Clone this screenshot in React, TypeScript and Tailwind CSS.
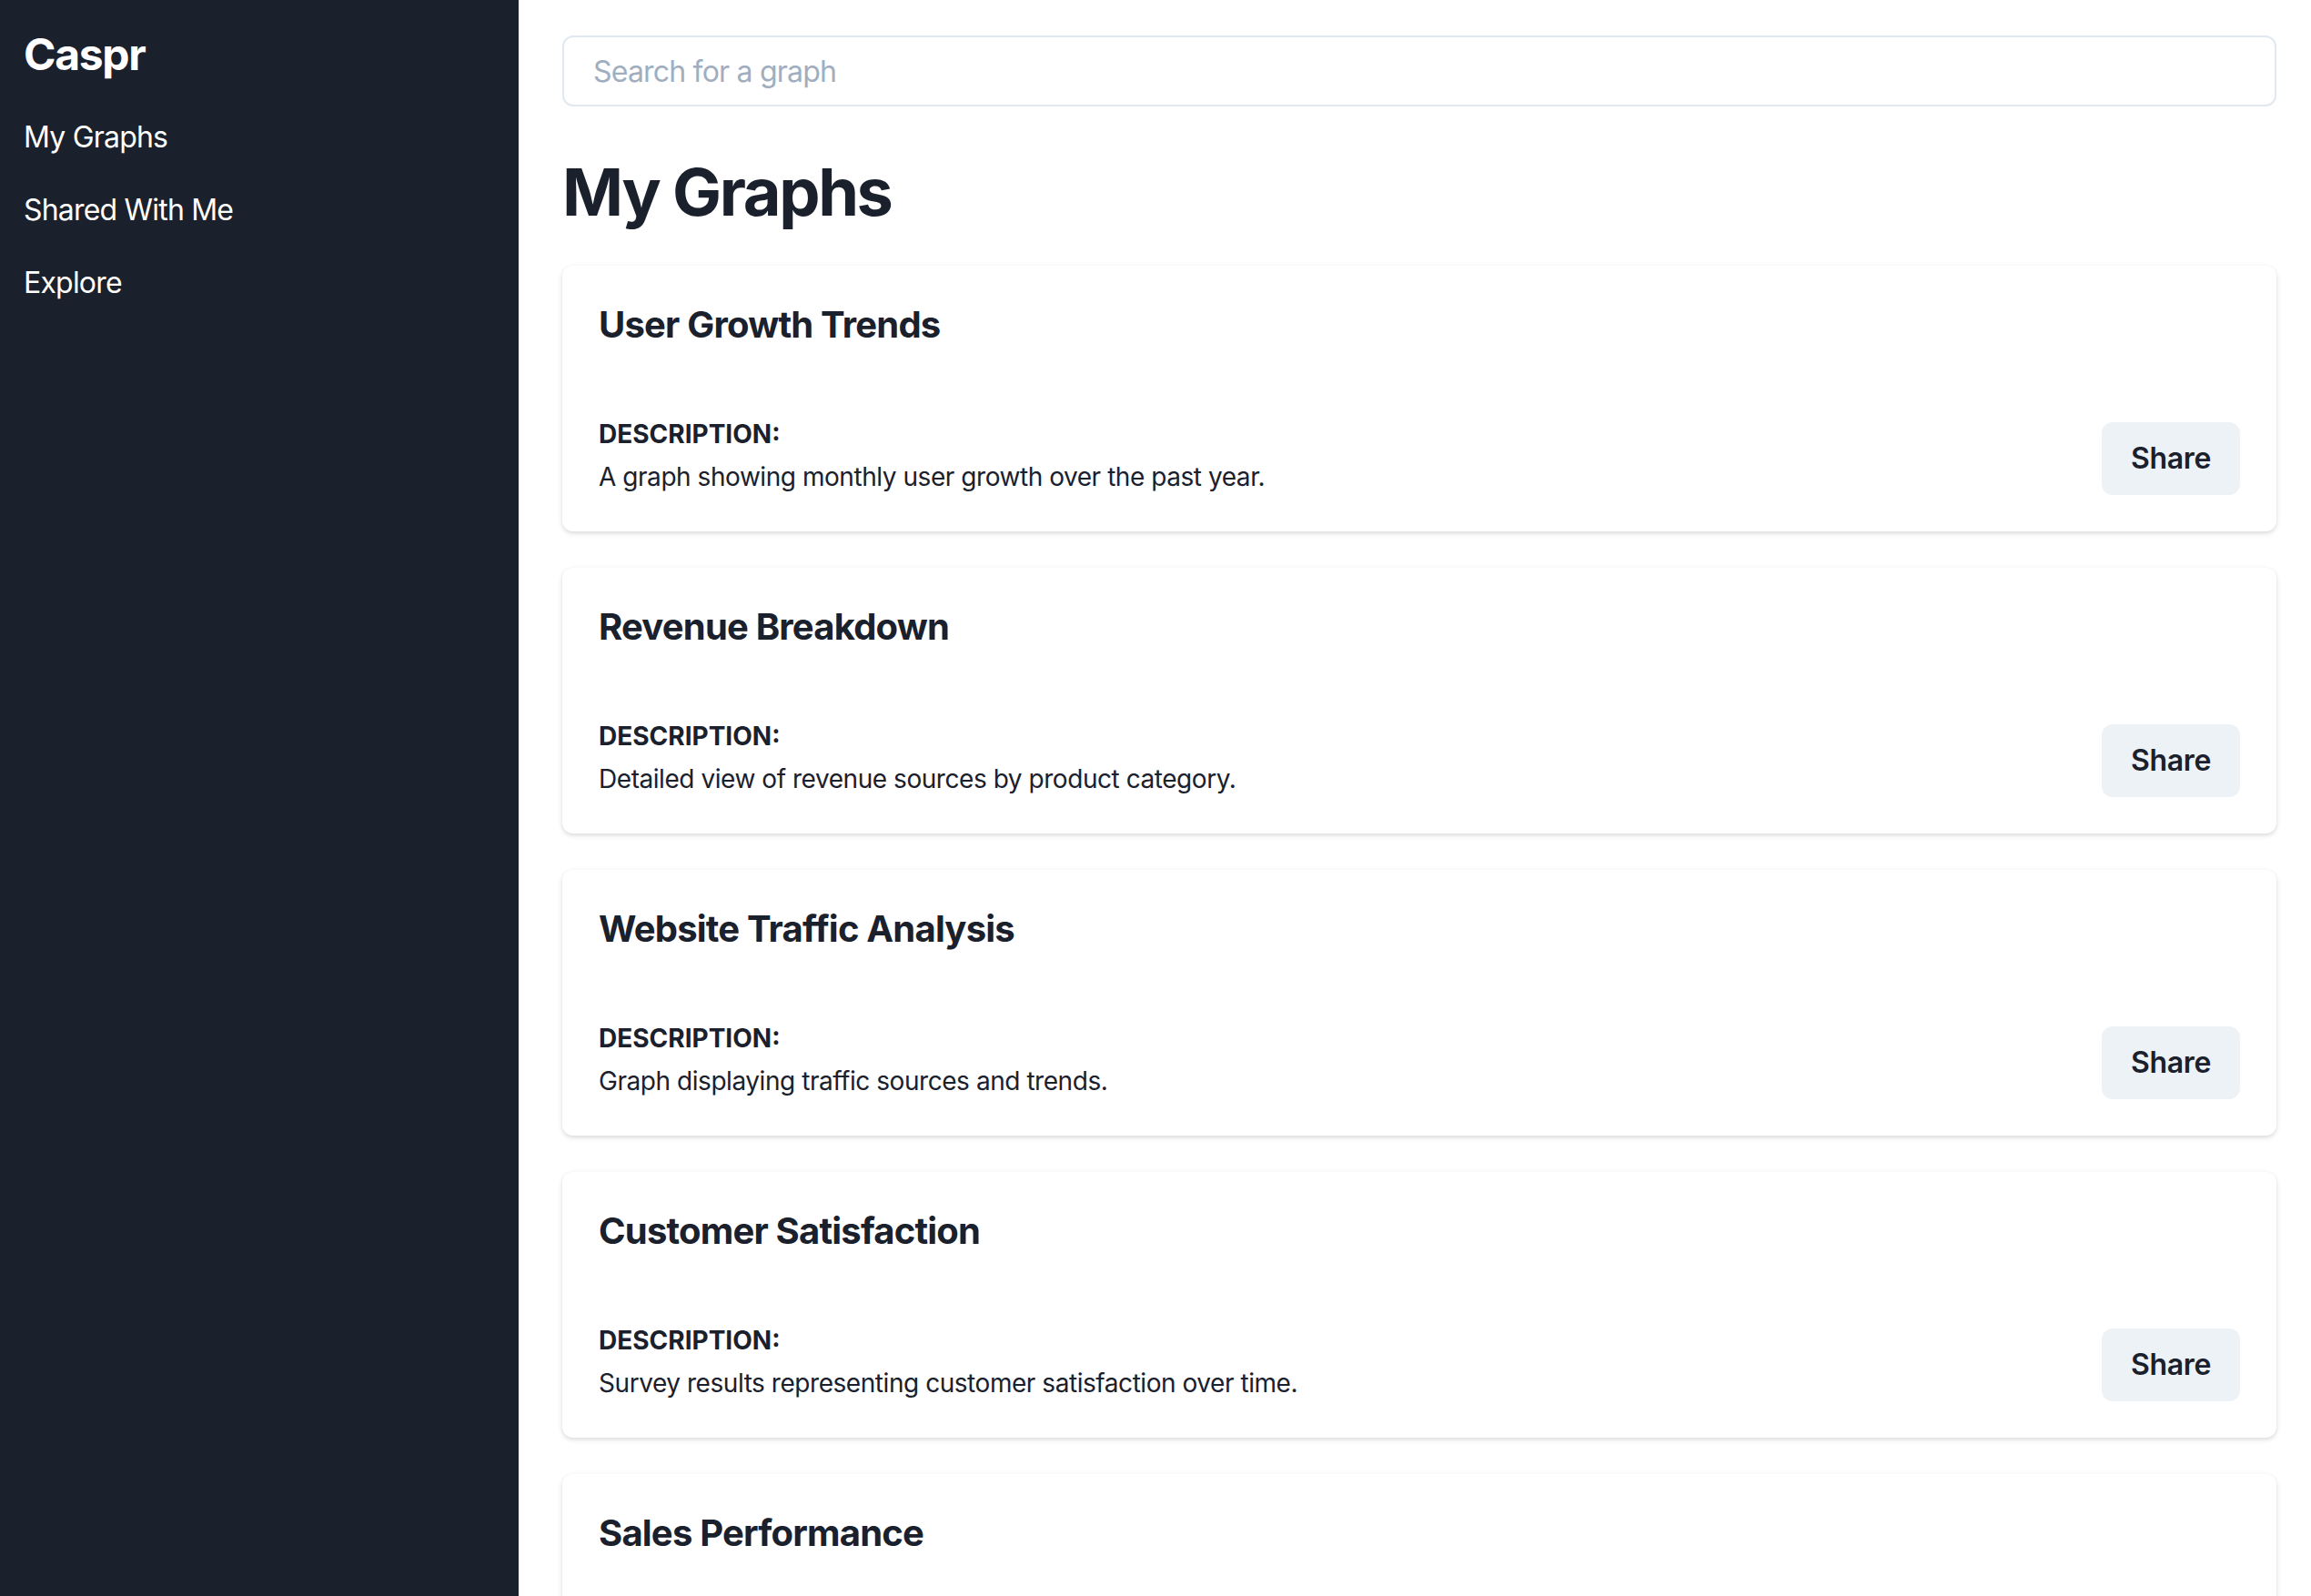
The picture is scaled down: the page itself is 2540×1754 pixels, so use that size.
const graphs = [
  {
    title: "User Growth Trends",
    description: "A graph showing monthly user growth over the past year.",
  },
  {
    title: "Revenue Breakdown",
    description: "Detailed view of revenue sources by product category.",
  },
  {
    title: "Website Traffic Analysis",
    description: "Graph displaying traffic sources and trends.",
  },
  {
    title: "Customer Satisfaction",
    description: "Survey results representing customer satisfaction over time.",
  },
  {
    title: "Sales Performance",
    description: "Quarterly sales figures compared across regions.",
  },
]

function GraphCard({ title, description }: { title: string; description: string }) {
  return (
    <div className="bg-white rounded-[12px] shadow-[0_2px_6px_rgba(0,0,0,0.1),0_2px_4px_rgba(0,0,0,0.06)]">
      <div className="px-[40px] pt-[41px] pb-[39px]">
        <h2 className="text-[40px] leading-[48px] font-bold text-[#1a202c] tracking-[-0.02em]">{title}</h2>
      </div>
      <div className="px-[40px] pt-[40px] pb-[40px] flex items-end justify-between">
        <div>
          <div className="text-[28px] leading-[34px] font-bold uppercase text-[#1a202c]">Description:</div>
          <p className="mt-[10px] text-[28px] leading-[40px] text-[#1a202c] tracking-[-0.016em]">{description}</p>
        </div>
        <button className="h-[80px] px-[32px] rounded-[12px] bg-[#edf2f7] text-[32px] font-semibold text-[#1a202c] tracking-[-0.01em]">
          Share
        </button>
      </div>
    </div>
  )
}

export default function App() {
  return (
    <div className="flex h-[1754px] overflow-hidden bg-white font-['Inter',sans-serif]">
      <aside className="w-[570px] shrink-0 bg-[#1a202c] text-white pl-[26px] pr-[24px] pt-[31px]">
        <h1 className="text-[48px] leading-[58px] font-bold tracking-[-0.027em]">Caspr</h1>
        <nav className="mt-[38px] flex flex-col gap-[32px]">
          <a className="text-[32px] leading-[48px] tracking-[-0.025em]">My Graphs</a>
          <a className="text-[32px] leading-[48px] tracking-[-0.025em]">Shared With Me</a>
          <a className="text-[32px] leading-[48px] tracking-[-0.025em]">Explore</a>
        </nav>
      </aside>

      <main className="flex-1 pl-[48px] pr-[38px] pt-[39px] overflow-hidden">
        <input
          className="w-full h-[78px] border-2 border-[#e2e8f0] rounded-[12px] px-[32px] text-[32px] tracking-[-0.025em] placeholder:text-[#a0aec0] outline-none"
          placeholder="Search for a graph"
        />
        <h1 className="mt-[51px] mb-[38px] text-[72px] leading-[86px] font-bold text-[#1a202c] tracking-[-0.033em]">My Graphs</h1>
        <div className="flex flex-col gap-[40px]">
          {graphs.map((g) => (
            <GraphCard key={g.title} title={g.title} description={g.description} />
          ))}
        </div>
      </main>
    </div>
  )
}
